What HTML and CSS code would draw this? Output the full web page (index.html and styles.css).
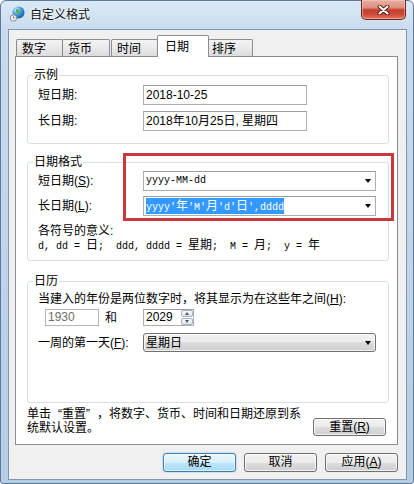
FILE: index.html
```html
<!DOCTYPE html>
<html lang="zh-CN">
<head>
<meta charset="utf-8">
<title>自定义格式</title>
<link rel="stylesheet" href="styles.css">
</head>
<body>
<div class="window">
  <div class="titlebar">
    <svg class="app-icon" width="16" height="16" viewBox="0 0 16 16">
      <defs>
        <radialGradient id="globe" cx="0.35" cy="0.3" r="0.85">
          <stop offset="0" stop-color="#d8f3ff"/>
          <stop offset="0.45" stop-color="#3d9be0"/>
          <stop offset="1" stop-color="#0c4a86"/>
        </radialGradient>
      </defs>
      <circle cx="9.5" cy="6.5" r="6" fill="url(#globe)"/>
      <path d="M7 3.5 q2.5 -1.2 3.5 1 q0.8 2 -1.5 3 q-1.5 0.3 -2 -1.5 z" fill="#5fb04a"/>
      <circle cx="4.5" cy="12" r="3.2" fill="#ececec" stroke="#8a8f96" stroke-width="1"/>
      <path d="M4.5 10.3 V12 H6" stroke="#6b7178" stroke-width="0.8" fill="none"/>
    </svg>
    <span class="title">自定义格式</span>
    <div class="close">
      <svg width="13" height="10" viewBox="0 0 13 10">
        <path d="M2.5 1.5 L10.5 8.5 M10.5 1.5 L2.5 8.5" stroke="#4a1712" stroke-width="3.8" stroke-linecap="round"/>
        <path d="M2.5 1.5 L10.5 8.5 M10.5 1.5 L2.5 8.5" stroke="#ffffff" stroke-width="2.1" stroke-linecap="round"/>
      </svg>
    </div>
  </div>

  <div class="client">
    <div class="tabs">
      <div class="tab tab-num">数字</div>
      <div class="tab tab-cur">货币</div>
      <div class="tab tab-time">时间</div>
      <div class="tab tab-date active">日期</div>
      <div class="tab tab-sort">排序</div>
    </div>

    <div class="panel">
      <fieldset class="group g-sample">
        <legend>示例</legend>
        <div class="row"><span class="lbl">短日期:</span><div class="textbox">2018-10-25</div></div>
        <div class="row"><span class="lbl">长日期:</span><div class="textbox">2018年10月25日, 星期四</div></div>
      </fieldset>

      <fieldset class="group g-format">
        <legend>日期格式</legend>
        <div class="row"><span class="lbl">短日期(<u>S</u>):</span><div class="combo"><span class="mono">yyyy-MM-dd</span><i class="arrow"></i></div></div>
        <div class="row"><span class="lbl">长日期(<u>L</u>):</span><div class="combo"><span class="mono sel">yyyy'<span class="cj">年</span>'M'<span class="cj">月</span>'d'<span class="cj">日</span>',dddd</span><i class="arrow"></i></div></div>
        <div class="meaning">各符号的意义:<br><span class="mono">d, dd = <span class="cj">日</span>;  ddd, dddd = <span class="cj">星期</span>;  M = <span class="cj">月</span>;  y = <span class="cj">年</span></span></div>
      </fieldset>

      <fieldset class="group g-cal">
        <legend>日历</legend>
        <div class="hint">当建入的年份是两位数字时，将其显示为在这些年之间(<u>H</u>):</div>
        <div class="year-row">
          <div class="textbox year disabled">1930</div>
          <span class="and">和</span>
          <div class="spinbox">
            <span class="spin-text">2029</span>
            <span class="spinner"><i class="up"></i><i class="down"></i></span>
          </div>
        </div>
        <div class="row week-row"><span class="lbl">一周的第一天(<u>F</u>):</span><div class="combo combo-btn"><span>星期日</span><i class="arrow"></i></div></div>
      </fieldset>

      <div class="reset-row">
        <p class="reset-text">单击<span class="lq">“</span>重置<span class="rq">”</span>，将数字、货币、时间和日期还原到系<br>统默认设置。</p>
        <button class="btn btn-reset">重置(<u>R</u>)</button>
      </div>

      <div class="annot"></div>
    </div>

    <div class="dialog-buttons">
      <button class="btn default">确定</button>
      <button class="btn">取消</button>
      <button class="btn">应用(<u>A</u>)</button>
    </div>
  </div>
</div>
</body>
</html>
```

FILE: styles.css
```css
* { box-sizing: border-box; }
html, body { margin: 0; padding: 0; }
body {
  width: 414px;
  height: 484px;
  overflow: hidden;
  background: #ffffff;
  font-family: "Liberation Sans", "Noto Sans CJK SC", sans-serif;
  font-size: 12px;
  line-height: 14px;
  color: #000;
}

.window {
  width: 414px;
  height: 484px;
  border: 1px solid #5b7a9c;
  border-radius: 6px 6px 3px 3px;
  padding: 0 6px 6px 7px;
  background: linear-gradient(to bottom, #dce9f6 0px, #c9dbee 28px, #bfd4ea 55%, #b5cce5 100%);
  display: flex;
  flex-direction: column;
}

.titlebar {
  height: 28px;
  flex: none;
  display: flex;
  align-items: center;
  padding-bottom: 2px;
}
.app-icon { margin-left: 1px; margin-right: 5px; flex: none; }
.title {
  font-family: "Noto Sans CJK SC", sans-serif;
  font-size: 12px;
  color: #111;
  text-shadow: 0 0 5px #fff, 0 0 3px #fff;
}
.close {
  margin-left: auto;
  margin-right: 1px;
  margin-top: -1px;
  align-self: flex-start;
  width: 45px;
  height: 20px;
  border: 1px solid #6b2923;
  border-top: none;
  border-radius: 0 0 5px 5px;
  background: linear-gradient(to bottom, #eab0a3 0%, #dc8f80 40%, #c4402f 52%, #cc4a38 75%, #e07a5e 100%);
  box-shadow: inset 0 0 0 1px rgba(255, 210, 200, 0.45);
  display: flex;
  align-items: center;
  justify-content: center;
}

.client {
  flex: 1;
  border: 1px solid #8494a8;
  background: #f0f0f0;
  padding: 0 8px 7px 6px;
  display: flex;
  flex-direction: column;
}

.tabs {
  height: 26px;
  flex: none;
  display: flex;
  align-items: flex-end;
  padding-left: 1px;
}
.tab {
  height: 17px;
  border: 1px solid #898c95;
  border-bottom: none;
  border-radius: 2px 2px 0 0;
  background: linear-gradient(to bottom, #f4f4f4 0%, #e9e9e9 50%, #dcdcdc 100%);
  padding: 1px 0 0 5px;
  font-family: "Noto Sans CJK SC", sans-serif;
  line-height: 14px;
}
.tab-num { width: 47px; }
.tab-cur { width: 48px; margin-left: -1px; }
.tab-time { width: 47px; margin-left: 1px; }
.tab-date { width: 52px; margin-left: -1px; }
.tab-sort { width: 45px; margin-left: -1px; padding-left: 3px; }
.tab.active {
  height: 22px;
  margin-bottom: -1px;
  background: #ffffff;
  position: relative;
  z-index: 1;
  padding: 3px 0 0 7px;
}

.panel {
  position: relative;
  flex: none;
  border: 1px solid #898c95;
  background: #ffffff;
  padding: 0 8px 8px 11px;
}

.group {
  margin: 11px 0 0;
  padding: 3px 8px 12px 5px;
  border: 1px solid #d5dfe5;
  border-radius: 3px;
  min-width: 0;
}
.group legend {
  padding: 0 1px;
  line-height: 14px;
}

.row {
  display: flex;
  align-items: center;
  margin-left: 5px;
}
.lbl { width: 105px; flex: none; }
.g-sample .row + .row { margin-top: 6px; }

.textbox {
  width: 164px;
  height: 20px;
  border: 1px solid #abadb3;
  border-top-color: #9a9ca3;
  background: #ffffff;
  padding: 0 0 0 2px;
  line-height: 18px;
  white-space: nowrap;
}

.g-format { padding-top: 2px; padding-bottom: 6px; }
.g-format .row + .row { margin-top: 5px; }

.combo {
  width: 233px;
  height: 20px;
  border: 1px solid #abadb3;
  border-top-color: #9a9ca3;
  background: #ffffff;
  display: flex;
  align-items: center;
  padding-left: 2px;
}
.arrow {
  margin-left: auto;
  margin-right: 4px;
  width: 0;
  height: 0;
  border-top: 4px solid #000;
  border-left: 3.5px solid transparent;
  border-right: 3.5px solid transparent;
}

.mono {
  font-family: "Liberation Mono", "Noto Sans CJK SC", monospace;
  font-size: 10px;
  white-space: pre;
}
.cj {
  font-family: "Liberation Sans", "Noto Sans CJK SC", sans-serif;
  font-size: 12px;
}
.sel {
  background: #3399ff;
  color: #ffffff;
  line-height: 16px;
  display: inline-block;
  height: 16px;
}

.meaning {
  margin: 8px 0 0 5px;
  line-height: 14px;
}

.g-cal { margin-top: 13px; padding-top: 4px; padding-bottom: 50px; }
.hint { margin-left: 5px; line-height: 14px; white-space: nowrap; }

.year-row {
  display: flex;
  align-items: center;
  margin: 3px 0 0 12px;
  height: 17px;
}
.textbox.year {
  width: 54px;
  height: 17px;
  line-height: 15px;
}
.textbox.disabled {
  color: #6d6d6d;
  border-color: #b5b5b5;
}
.and {
  width: 44px;
  padding-left: 6px;
}
.spinbox {
  width: 51px;
  height: 17px;
  border: 1px solid #abadb3;
  border-top-color: #9a9ca3;
  background: #ffffff;
  display: flex;
}
.spin-text { flex: 1; padding-left: 2px; line-height: 15px; }
.spinner {
  width: 12px;
  display: flex;
  flex-direction: column;
  gap: 1px;
}
.spinner i {
  flex: 1;
  border: 1px solid #a6b3c2;
  border-radius: 2px;
  background: linear-gradient(to bottom, #f6f8fb, #dfe5ed);
  display: flex;
  align-items: center;
  justify-content: center;
}
.spinner i::after {
  content: "";
  width: 0;
  height: 0;
  border-left: 2.5px solid transparent;
  border-right: 2.5px solid transparent;
}
.spinner .up::after { border-bottom: 3px solid #4d5b6b; }
.spinner .down::after { border-top: 3px solid #4d5b6b; }

.week-row { margin-top: 7px; }
.combo-btn {
  height: 19px;
  border: 1px solid #707070;
  border-radius: 3px;
  background: linear-gradient(to bottom, #f2f2f2 0%, #ebebeb 50%, #dddddd 50%, #cfcfcf 100%);
  box-shadow: inset 0 0 0 1px rgba(255, 255, 255, 0.7);
}

.reset-row {
  display: flex;
  align-items: flex-start;
  margin-top: 4px;
}
.reset-text {
  margin: 0;
  line-height: 14px;
  white-space: nowrap;
}
.lq { margin-left: 7px; }
.rq { margin-right: 7px; }

.btn {
  width: 73px;
  height: 19px;
  padding: 0;
  border: 1px solid #707070;
  border-radius: 3px;
  background: linear-gradient(to bottom, #f2f2f2 0%, #ebebeb 50%, #dddddd 50%, #cfcfcf 100%);
  box-shadow: inset 0 0 0 1px rgba(255, 255, 255, 0.7);
  font-family: "Liberation Sans", "Noto Sans CJK SC", sans-serif;
  font-size: 12px;
  line-height: 17px;
  color: #000;
  text-align: center;
}
.btn-reset {
  margin-left: auto;
  margin-right: 3px;
  margin-top: 11px;
  height: 18px;
  line-height: 16px;
}
.btn.default {
  border-color: #3c7fb1;
  background: linear-gradient(to bottom, #eaf6fd 0%, #d9f0fc 50%, #bee6fd 50%, #a7d9f5 100%);
  box-shadow: inset 0 0 0 1px rgba(255, 255, 255, 0.6), 0 0 2px rgba(60, 160, 230, 0.6);
}

.dialog-buttons {
  display: flex;
  justify-content: flex-end;
  gap: 8px;
  margin-top: 8px;
}

.annot {
  position: absolute;
  left: 107px;
  top: 96px;
  width: 271px;
  height: 68px;
  border: 3px solid #c9393c;
}
```
